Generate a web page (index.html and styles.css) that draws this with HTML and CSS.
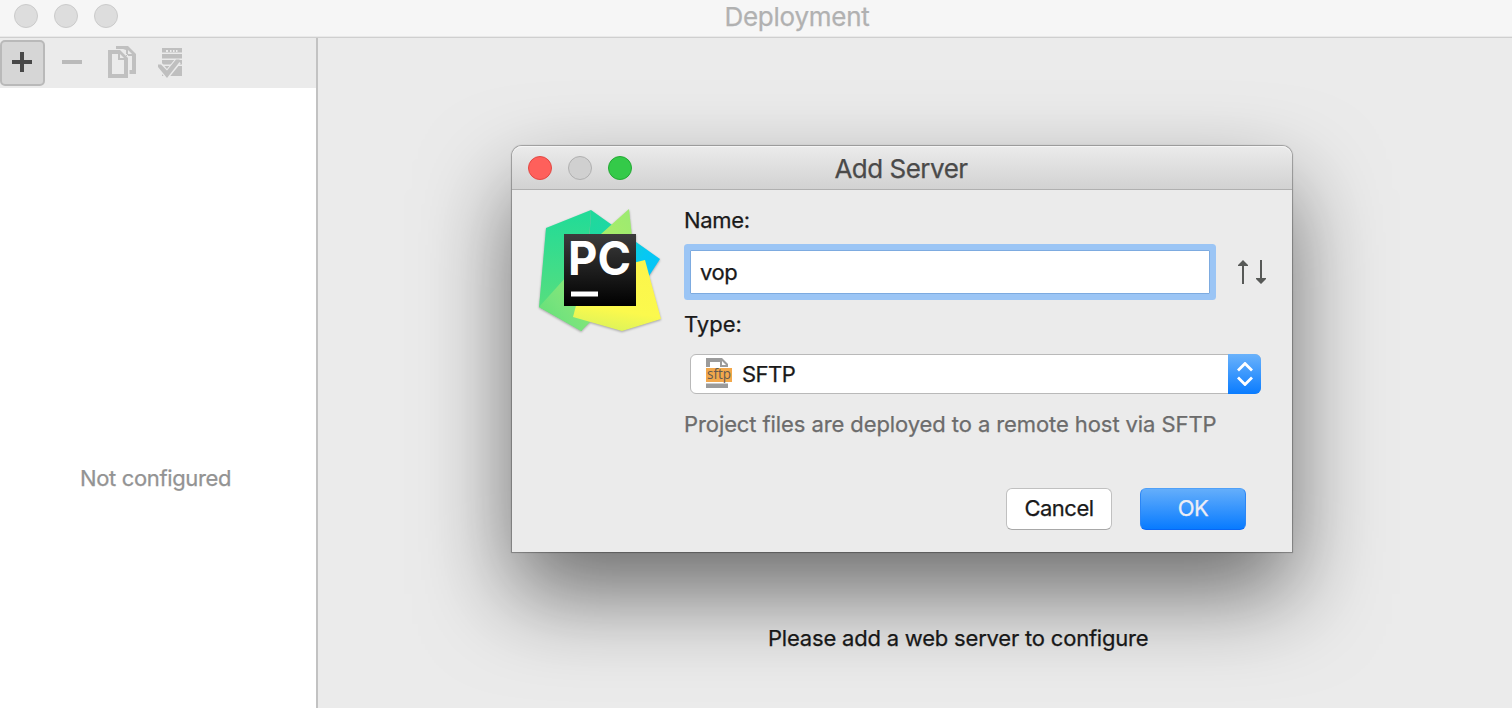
FILE: index.html
```html
<!DOCTYPE html>
<html lang="en">
<head>
<meta charset="utf-8">
<title>Deployment</title>
<link rel="stylesheet" href="styles.css">
</head>
<body>
<div class="window">
  <header class="window-bar">
    <div class="lights"><span class="light"></span><span class="light"></span><span class="light"></span></div>
    <h1 class="window-title">Deployment</h1>
  </header>
  <div class="panes">
    <aside class="sidebar">
      <div class="toolbar">
        <span class="tool tool-active"><svg width="20" height="20" viewBox="0 0 20 20"><path d="M8 0h4v8h8v4h-8v8H8v-8H0V8h8z" fill="#484848"/></svg></span>
        <svg class="tool-minus" width="20" height="4"><path d="M0 0h20v4H0z" fill="#bababa"/></svg>
        <svg class="tool-copy" width="28" height="32" viewBox="0 0 28 32" fill="#c0c0c0"><path d="M8 0h12l8 8v20h-7v-4h3V10h-6V4l-3-1H8z"/><path d="M20 4v4h4z" fill="#ebebeb"/><path d="M13 3l8 8v17" fill="none" stroke="#ebebeb"/><path d="M0 4h12l8 8v20H0z"/><path d="M4 8h6v6h6v14H4z" fill="#ebebeb"/><path d="M12 8v4h4z" fill="#ebebeb"/></svg>
        <svg class="tool-server" width="24" height="30" viewBox="0 0 24 30"><path d="M4 0h20v28H4z" fill="#bfbfbf"/><path d="M4 4.500h20v1.500H4zM4 10.500h20v1.500H4zM4 16.500h20v1.500H4zM8 2h2v2H8zM12 2h1.500v2H12zM15 2h1.500v2H15zM18 2h1.500v2H18z" fill="#ebebeb"/><path d="M1 17l8 9.500L20 13" fill="none" stroke="#ebebeb" stroke-width="7"/><path d="M0 16.500h3l6 6 9-11h3.500V14L9 30 0 19z" fill="#bfbfbf"/></svg>
      </div>
      <div class="list">Not configured</div>
    </aside>
    <main class="detail"><p class="hint">Please add a web server to configure</p></main>
  </div>
</div>

<section class="dialog">
  <header class="dialog-bar">
    <div class="lights"><span class="light light-red"></span><span class="light light-off"></span><span class="light light-green"></span></div>
    <h2 class="dialog-title">Add Server</h2>
  </header>
  <div class="dialog-body">
    <svg class="logo" width="130" height="130" viewBox="0 0 130 130">
      <defs>
        <linearGradient id="green" x1="0" y1="0" x2="0" y2="1"><stop offset="0" stop-color="#20db98"/><stop offset="1" stop-color="#64df78"/></linearGradient>
        <linearGradient id="cyan" x1="0" y1="0" x2="1" y2="1"><stop offset="0" stop-color="#20d99a"/><stop offset=".2" stop-color="#1ed8a2"/><stop offset=".6" stop-color="#06c8f3"/><stop offset="1" stop-color="#04befc"/></linearGradient>
        <linearGradient id="lime" x1="1" y1="0" x2="0" y2="1"><stop offset="0" stop-color="#9bea72"/><stop offset=".3" stop-color="#a9ed68"/><stop offset=".8" stop-color="#76e37d"/><stop offset="1" stop-color="#5ddf75"/></linearGradient>
        <linearGradient id="yellow" x1=".6" y1="0" x2=".4" y2="1"><stop offset="0" stop-color="#fcf54b"/><stop offset=".7" stop-color="#fbf94d"/><stop offset="1" stop-color="#dcf35a"/></linearGradient>
        <linearGradient id="black" x1="0" y1="0" x2="0" y2="1"><stop offset="0" stop-color="#3c3c3c"/><stop offset="1" stop-color="#000"/></linearGradient>
      </defs>
      <g class="logo-shapes">
        <path d="M57 5 126 54 87 114 54 60z" fill="url(#cyan)"/>
        <path d="M12 23 57 5 53 70 48 126 5 102z" fill="url(#green)"/>
        <path d="M5 102 32 72 67 29 95 4 100 50 60 113 47 126z" fill="url(#lime)"/>
        <path d="M39 112 50 70 111 55 127 114 88 126z" fill="url(#yellow)"/>
        <path d="M30 29h72v72H30z" fill="url(#black)"/>
      </g>
      <path d="M37 86.500h27v5H37z" fill="#fff"/>
      <text class="logo-text" x="34" y="70" textLength="63" lengthAdjust="spacingAndGlyphs">PC</text>
    </svg>
    <div class="form">
      <label class="label" for="name">Name:</label>
      <div class="name-row">
        <input class="name-input" id="name" type="text" value="vop">
        <svg class="arrows" width="28" height="24" viewBox="0 0 28 24" fill="#575957"><path d="M4 24V6H0V5l5-5 5 5v1H6v18zM22 0v18h-4v1l5 5 5-5v-1h-4V0z"/></svg>
      </div>
      <div class="label label-type">Type:</div>
      <div class="select">
        <svg class="file-icon" width="26" height="30" viewBox="0 0 26 30"><path d="M0 0h16l6 6v24H0z" fill="#9b9b9b"/><path d="M4 4h10v6h4v15H4z" fill="#fff"/><path d="M16 3v4h4z" fill="#fff"/><path d="M0 9h26v16.500H0z" fill="#fff"/><path d="M0 10h26v14H0z" fill="#f2a84b"/><text class="file-text" x="1" y="21" textLength="24" lengthAdjust="spacingAndGlyphs">sftp</text></svg>
        <span class="select-value">SFTP</span>
        <span class="select-cap"><svg width="16" height="24" viewBox="0 0 16 24" fill="none" stroke="#fff" stroke-width="2.800"><path d="M1 8.500l7-7 7 7M1 15.500l7 7 7-7"/></svg></span>
      </div>
      <p class="note">Project files are deployed to a remote host via SFTP</p>
    </div>
  </div>
  <footer class="actions">
    <button class="button">Cancel</button>
    <button class="button button-primary">OK</button>
  </footer>
</section>
</body>
</html>
```
FILE: styles.css
```css
* { box-sizing: border-box; }
body { margin: 0; height: 708px; overflow: hidden; background: #ebebeb; font: 22px/26px Inter, Roboto, sans-serif; letter-spacing: -.5px; color: #1a1a1a; -webkit-text-stroke: .25px; }
h1, h2, p { margin: 0; font-weight: 400; }
svg { display: block; flex: none; -webkit-text-stroke: 0; }
.window { height: 708px; display: flex; flex-direction: column; }
.window-bar { height: 38px; flex: none; display: grid; grid-template-columns: 118px 1fr 36px; background: #f6f6f6; border-bottom: 1px solid #cfcfcf; box-shadow: inset 0 -1px #e9e9e9; }
.lights { display: flex; gap: 16px; padding: 4px 0 0 14px; }
.light { width: 24px; height: 24px; border-radius: 50%; background: #dddddd; border: 1px solid #cbcbcb; }
.window-title { text-align: center; font-size: 26px; line-height: 34px; letter-spacing: -.25px; color: #b1b1b1; }
.panes { flex: 1; display: flex; }
.sidebar { width: 318px; flex: none; display: flex; flex-direction: column; border-right: 2px solid #c2c2c2; }
.toolbar { height: 50px; flex: none; display: flex; align-items: flex-start; padding-top: 1px; }
.tool { height: 46px; margin-top: 1px; padding: 0 2px 2px 0; display: flex; justify-content: center; align-items: center; }
.tool-active { width: 45px; background: #d6d6d6; border: 2px solid #b9b9b9; border-radius: 5px; }
.tool-minus { margin: 21px 0 0 17px; }
.tool-copy { margin: 7px 0 0 26px; }
.tool-server { margin: 9px 0 0 22px; }
.list { flex: 1; background: #fff; padding: 377px 0 0 80px; color: #939393; letter-spacing: -.35px; }
.detail { flex: 1; padding: 587px 0 0 450px; }
.hint { white-space: nowrap; letter-spacing: -.2px; }
.dialog { position: absolute; left: 512px; top: 146px; width: 780px; height: 406px; background: #ebebeb; border-radius: 10px 10px 0 0; box-shadow: 0 0 1px 1px rgba(0,0,0,.3), 0 42px 90px rgba(0,0,0,.54); }
.dialog-bar { height: 44px; display: grid; grid-template-columns: 120px 1fr 122px; background: linear-gradient(#ebebeb, #d2d2d2); border-radius: 10px 10px 0 0; border-bottom: 1px solid #b0b0b0; box-shadow: inset 0 1px #f5f5f5; }
.dialog-bar .lights { padding: 10px 0 0 16px; }
.light-red { background: #fe605b; border-color: #e24843; }
.light-off { background: #d0d0d0; border-color: #b0b0b0; }
.light-green { background: #34ca49; border-color: #24a934; }
.dialog-title { text-align: center; font-size: 26px; line-height: 46px; color: #4a4a4a; }
.dialog-body { display: flex; height: 288px; padding-left: 22px; }
.logo { margin-top: 15px; }
.logo-shapes { filter: drop-shadow(0 1px 1px rgba(0,0,0,.3)); }
.logo-text { font: 700 47px Inter, sans-serif; letter-spacing: 0; fill: #fff; }
.form { padding: 17px 0 0 20px; width: 620px; }
.label { display: block; height: 26px; letter-spacing: -.3px; }
.label-type { letter-spacing: 0; }
.name-row { display: flex; align-items: center; gap: 28px; margin: 17px 0 17px 6px; height: 44px; }
.name-input { width: 520px; height: 44px; padding: 0 9px; border: 1px solid #7dabe0; border-radius: 1px; outline: none; box-shadow: 0 0 0 6px #9bc5f5; background: #fff; font: inherit; letter-spacing: inherit; color: #1a1a1a; }
.select { width: 571px; height: 40px; margin: 17px 0 0 6px; display: flex; align-items: center; background: #fff; border: 1px solid #b9b9b9; border-radius: 6px; }
.file-icon { margin: -2px 10px 0 15px; }
.file-text { font: 14px "Open Sans", sans-serif; letter-spacing: 0; fill: #635a50; }
.select-value { flex: 1; }
.select-cap { width: 33px; height: 40px; margin-right: -1px; display: flex; align-items: center; justify-content: center; background: linear-gradient(#6ab2fb, #0a7cff); border-radius: 0 6px 6px 0; }
.note { margin-top: 17px; color: #6c6c6c; white-space: nowrap; letter-spacing: -.09px; }
.actions { display: flex; justify-content: flex-end; gap: 28px; padding: 10px 46px 0 0; }
.button { width: 106px; height: 42px; padding: 0 0 2px; border: 1px solid #c0c0c0; border-bottom-color: #a8a8a8; border-radius: 6px; background: #fff; font: inherit; letter-spacing: inherit; color: #1a1a1a; }
.button-primary { color: #ededf5; background: linear-gradient(#64aefb, #087bff); border-color: #4fa0f8 #2c86f5 #0867f5; }
```
